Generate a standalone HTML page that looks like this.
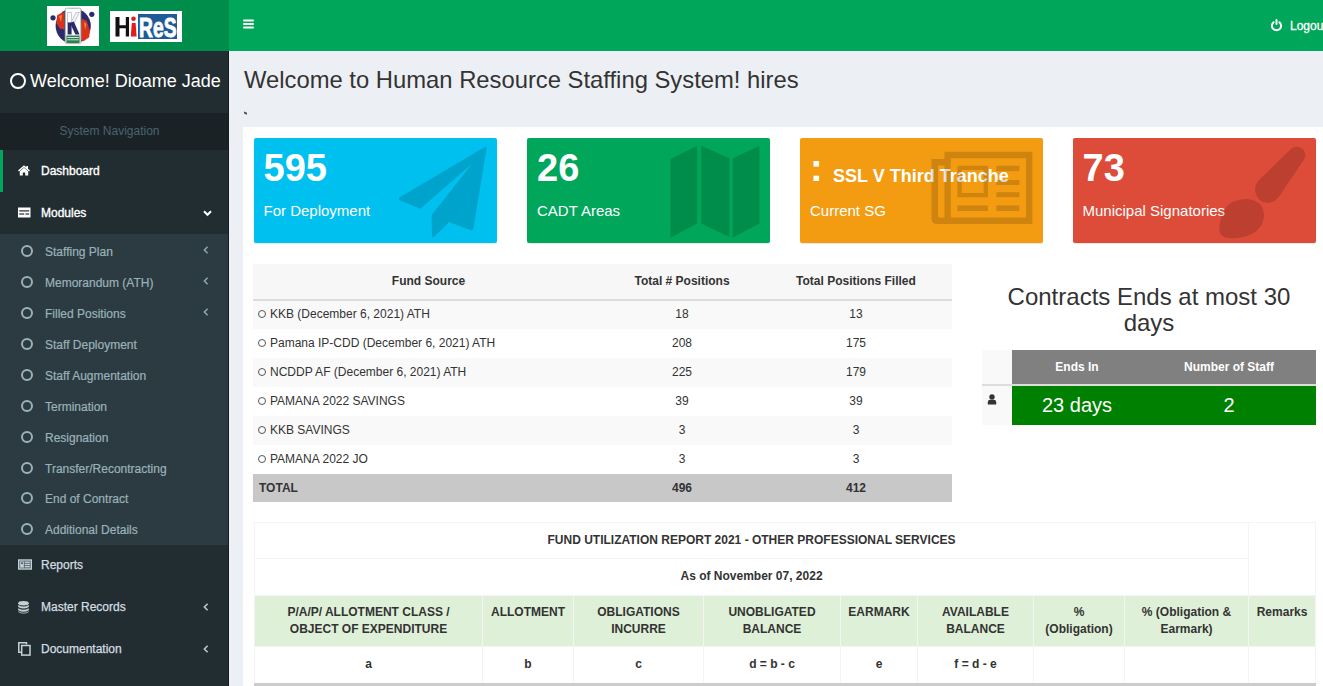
<!DOCTYPE html>
<html><head><meta charset="utf-8">
<style>
*{box-sizing:border-box;margin:0;padding:0}
html,body{width:1323px;height:686px;overflow:hidden;background:#ecf0f5;font-family:"Liberation Sans",sans-serif;color:#333}
.abs{position:absolute}
#logo{left:0;top:0;width:229px;height:51px;background:#008d4c}
#nav{left:229px;top:0;width:1094px;height:51px;background:#00a65a}
#side{left:0;top:51px;width:228px;height:635px;background:#222d32}
#sideborder{left:228px;top:51px;width:1px;height:635px;background:#151b1e}
.user{left:0;top:51px;width:228px;height:62px;color:#fff;font-size:18px}
.navhdr{left:0;top:113px;width:228px;padding-right:9px;height:37px;background:#1a2226;color:#4b646f;font-size:12px;text-align:center;line-height:37px}
.mi{position:absolute;left:0;width:228px;height:42px;color:#fff;font-size:12px;line-height:42px}
.mi .t{position:absolute;left:41px;top:0;color:#d5dde1;-webkit-text-stroke:0.25px #d5dde1}
.mi .t.w{color:#fff;-webkit-text-stroke:0.35px #fff}
.sub{left:0;top:234px;width:228px;height:311px;background:#2c3b41}
.si{position:absolute;left:0;width:228px;height:31px;color:#9ab2b9;font-size:12px;line-height:31px}
.si .t{position:absolute;left:45px;top:0.5px;-webkit-text-stroke:0.2px #9ab2b9}
.si .c{position:absolute;left:21px;top:9px;width:12px;height:12px;border:2px solid #9ab2b9;border-radius:50%}
.chev{position:absolute;left:203px;width:6px;height:6px;border-left:1.5px solid currentColor;border-bottom:1.5px solid currentColor;transform:rotate(45deg)}
#title{left:244px;top:65px;font-size:23.8px;color:#333;white-space:nowrap;line-height:30px}
#box{left:243px;top:127px;width:1090px;height:600px;background:#fff}
.sb{position:absolute;top:138px;height:105px;width:243px;border-radius:2px;color:#fff;overflow:hidden;box-shadow:0 1px 1px rgba(0,0,0,0.1)}
.sb .n{position:absolute;left:10px;top:9px;font-size:38px;font-weight:700;line-height:42px}
.sb .l{position:absolute;left:10px;top:63px;font-size:15px;line-height:20px}
table{border-collapse:collapse}

.ft{width:699px;table-layout:fixed;font-size:12px;color:#333}
.ft th{height:36px;padding-bottom:1px;background:#f7f7f7;border-bottom:2px solid #ddd;font-weight:700;text-align:center;vertical-align:middle}
.ft td{height:29px;text-align:center;vertical-align:middle;white-space:nowrap;padding-bottom:2px}
.ft td.l{text-align:left;padding-left:5px}
.ft tr.o td{background:#f9f9f9}
.ft tr.tot td{background:#c8c8c8;font-weight:700;height:28px;padding-bottom:0}
.ci{display:inline-block;width:8px;height:8px;border:1.2px solid #555;border-radius:50%;margin-right:4px;vertical-align:0px}
.ct{width:334px;table-layout:fixed;font-size:12px}
.ct th{height:35px;font-weight:700;color:#fff;border-bottom:2px solid #ddd}
.ct th.e,.ct td.e{background:#f9f9f9;position:relative}
.ct th.g{background:#808080}
.ct td{height:40px;vertical-align:middle;text-align:center}
.ct td.gg{background:#008000;color:#fff;font-size:20px}
.fu{width:1061px;table-layout:fixed;font-size:12px;color:#333}
.fu td,.fu th{border:1px solid #f4f4f4;text-align:center}
.fu tr.t1 td{height:36px;font-weight:700;padding-bottom:2px}
.fu tr.t2 td{height:37px;font-weight:700;padding-bottom:2px}
.fu tr.hd th{height:51px;background:#dff0d8;font-weight:700;vertical-align:top;padding-top:8px;line-height:17px}
.fu tr.dr td{height:38px;padding-bottom:2px;font-weight:700;border-bottom:3px solid #ccc}
</style></head><body>
<div id="logo" class="abs"></div>
<div id="nav" class="abs"></div>
<svg class="abs" style="left:47px;top:6px" width="52" height="40" viewBox="0 0 52 40">
 <rect x="0" y="0" width="52" height="40" fill="#fff"/>
 <circle cx="26.2" cy="20" r="17.6" fill="#2b2a6e"/>
 <path d="M10.2 8.9 L17.4 6 L17.4 23.6 L12.7 22.4 L9.5 17.2 Z" fill="#d8321f"/>
 <path d="M12 10 L15 9 L14 16 Z" fill="#f08a2a"/>
 <path d="M35 12.7 L39.7 14.7 L42.9 24.9 L42.2 31.3 L36.5 35.2 L33.9 33.9 L33.9 17.2 Z" fill="#d8321f"/>
 <path d="M37 16 L39.5 18 L38 24 Z" fill="#f08a2a"/>
 <circle cx="6" cy="11.8" r="2.6" fill="#2b2a6e"/>
 <circle cx="44.8" cy="8.3" r="2.6" fill="#2b2a6e"/>
 <rect x="18.2" y="2.2" width="15.7" height="35.5" rx="1.5" fill="#fff" stroke="#8fa89a" stroke-width="0.8"/>
 <path d="M20.6 6.5 H24.6 V17 H20.6 Z" fill="#fff" stroke="#b0b0c0" stroke-width="0.7"/>
 <path d="M24.3 16.5 L28.8 6.5 H32.3 L26.8 17.5 Z" fill="#f4f4f8" stroke="#b0b0c0" stroke-width="0.7"/>
 <path d="M20.6 16.5 H24.6 V28.5 H20.6 Z" fill="#2b2a6e"/>
 <path d="M23 17 L26.8 15.6 L32.6 28.5 H28.4 Z" fill="#2b2a6e"/>
 <rect x="19.4" y="29.5" width="13.2" height="7.5" fill="#2f7d50"/>
 <rect x="20.2" y="31" width="11.6" height="1" fill="#cfe3d6"/>
 <rect x="20.2" y="33.3" width="11.6" height="1" fill="#cfe3d6"/>
</svg>
<svg class="abs" style="left:110px;top:11px" width="72" height="31" viewBox="0 0 72 31">
 <rect x="0" y="0" width="72" height="31" fill="#fff"/>
 <rect x="28" y="3" width="39" height="25" fill="#1e5a96"/>
 <path d="M5.5 6 H9.5 V14.3 H15.8 V6 H19 V25.5 H15.8 V17.3 H9.5 V25.5 H5.5 Z" fill="#111"/>
 <circle cx="23.5" cy="7.8" r="2.3" fill="#e21b1b"/>
 <path d="M21.8 12 H25.6 L26.6 25.5 H20.8 Z" fill="#e21b1b"/>
 <text x="29" y="26" font-family="Liberation Sans" font-weight="700" font-size="27" fill="#fff" stroke="#fff" stroke-width="0.9" textLength="37.5" lengthAdjust="spacingAndGlyphs">ReS</text>
</svg>
<svg class="abs" style="left:243px;top:18.5px" width="12" height="10" viewBox="0 0 12 10">
 <rect x="0" y="0.5" width="11" height="2" rx="1" fill="#fff"/>
 <rect x="0" y="4" width="11" height="2" rx="1" fill="#fff"/>
 <rect x="0" y="7.5" width="11" height="2" rx="1" fill="#fff"/>
</svg>
<svg class="abs" style="left:1270px;top:18px" width="13" height="14" viewBox="0 0 13 14">
 <path d="M3.6 4.2 A4.6 4.6 0 1 0 9.4 4.2" stroke="#fff" stroke-width="2" fill="none" stroke-linecap="round"/>
 <rect x="5.5" y="1" width="2" height="6" rx="1" fill="#fff"/>
</svg>
<div class="abs" style="left:1290px;top:18px;font-size:12px;line-height:16px;color:#fff;-webkit-text-stroke:0.3px #fff;white-space:nowrap">Logout</div>
<div id="side" class="abs"></div>
<div id="sideborder" class="abs"></div>
<div class="abs user"><span class="abs" style="left:10px;top:21.5px;width:16px;height:16.5px;border:2.7px solid #fff;border-radius:50%"></span><span class="abs" style="left:30px;top:20px;white-space:nowrap">Welcome! Dioame Jade</span></div>
<div class="abs navhdr">System Navigation</div>
<div class="mi" style="top:150px"><span class="abs" style="left:0;top:0;width:3px;height:42px;background:#00a65a"></span><svg class="abs" style="left:18px;top:15px" width="12" height="11" viewBox="0 0 12 11"><path d="M6 0.3 L0 5.6 L1 6.6 L6 2.3 L11 6.6 L12 5.6 L10 3.8 V1 H8.3 V2.3 Z" fill="#fff"/><path d="M1.8 6.2 L6 2.7 L10.2 6.2 V10.6 H7.2 V7.6 H4.8 V10.6 H1.8 Z" fill="#fff"/></svg><span class="t w">Dashboard</span></div>
<div class="mi" style="top:192px"><svg class="abs" style="left:18px;top:15px" width="13" height="11" viewBox="0 0 13 11"><rect x="0" y="0.5" width="12.5" height="10" fill="#fff"/><rect x="1.2" y="3.3" width="10" height="1.2" fill="#222d32"/><rect x="1.2" y="6.4" width="5" height="1.2" fill="#222d32"/><rect x="7.5" y="6.4" width="3.7" height="1.2" fill="#222d32"/></svg><span class="t w">Modules</span><svg class="abs" style="left:203px;top:18px" width="9" height="7" viewBox="0 0 9 7"><path d="M1 1.2 L4.5 4.8 L8 1.2" stroke="#fff" stroke-width="2" fill="none"/></svg></div>
<div class="abs sub">
 <div class="si" style="top:2px"><span class="c"></span><span class="t">Staffing Plan</span><svg class="abs" style="left:203px;top:10px" width="6" height="8" viewBox="0 0 6 8"><path d="M4.6 0.8 L1.4 4 L4.6 7.2" stroke="#8aa4af" stroke-width="1.6" fill="none"/></svg></div>
 <div class="si" style="top:33px"><span class="c"></span><span class="t">Memorandum (ATH)</span><svg class="abs" style="left:203px;top:10px" width="6" height="8" viewBox="0 0 6 8"><path d="M4.6 0.8 L1.4 4 L4.6 7.2" stroke="#8aa4af" stroke-width="1.6" fill="none"/></svg></div>
 <div class="si" style="top:64px"><span class="c"></span><span class="t">Filled Positions</span><svg class="abs" style="left:203px;top:10px" width="6" height="8" viewBox="0 0 6 8"><path d="M4.6 0.8 L1.4 4 L4.6 7.2" stroke="#8aa4af" stroke-width="1.6" fill="none"/></svg></div>
 <div class="si" style="top:95px"><span class="c"></span><span class="t">Staff Deployment</span></div>
 <div class="si" style="top:126px"><span class="c"></span><span class="t">Staff Augmentation</span></div>
 <div class="si" style="top:157px"><span class="c"></span><span class="t">Termination</span></div>
 <div class="si" style="top:188px"><span class="c"></span><span class="t">Resignation</span></div>
 <div class="si" style="top:219px"><span class="c"></span><span class="t">Transfer/Recontracting</span></div>
 <div class="si" style="top:249px"><span class="c"></span><span class="t">End of Contract</span></div>
 <div class="si" style="top:280px"><span class="c"></span><span class="t">Additional Details</span></div>
</div>
<div class="mi" style="top:544px"><svg class="abs" style="left:18px;top:15px" width="14" height="11" viewBox="0 0 14 11"><rect x="0" y="0.3" width="14" height="10.4" fill="#c5d1d6"/><rect x="1.3" y="1.6" width="11.4" height="7.8" fill="#5b6b72"/><rect x="2.2" y="2.4" width="3.6" height="6.2" fill="#c5d1d6"/><circle cx="4" cy="4.2" r="1.1" fill="#5b6b72"/><rect x="6.8" y="2.6" width="5" height="1.3" fill="#c5d1d6"/><rect x="6.8" y="4.8" width="5" height="1.3" fill="#c5d1d6"/><rect x="6.8" y="7" width="5" height="1.3" fill="#c5d1d6"/></svg><span class="t">Reports</span></div>
<div class="mi" style="top:586px"><svg class="abs" style="left:18px;top:15px" width="11" height="13" viewBox="0 0 11 13"><ellipse cx="5.5" cy="2.3" rx="5.3" ry="2.2" fill="#c5d1d6"/><path d="M0.2 3.9 Q5.5 7 10.8 3.9 V6 Q5.5 9 0.2 6Z" fill="#c5d1d6"/><path d="M0.2 7.2 Q5.5 10.3 10.8 7.2 V9.3 Q5.5 12.3 0.2 9.3Z" fill="#c5d1d6"/><path d="M0.2 10.3 Q5.5 13.4 10.8 10.3 V11 Q5.5 14 0.2 11Z" fill="#c5d1d6"/></svg><span class="t">Master Records</span><svg class="abs" style="left:203px;top:17px" width="6" height="8" viewBox="0 0 6 8"><path d="M4.6 0.8 L1.4 4 L4.6 7.2" stroke="#b8c7ce" stroke-width="1.6" fill="none"/></svg></div>
<div class="mi" style="top:628px"><svg class="abs" style="left:18px;top:14px" width="13" height="14" viewBox="0 0 13 14"><path d="M8.5 2.6 V0.8 H0.8 V10.2 H3" fill="none" stroke="#c5d1d6" stroke-width="1.5"/><rect x="3.7" y="3.5" width="8.3" height="9.6" fill="#222d32" stroke="#c5d1d6" stroke-width="1.5"/></svg><span class="t">Documentation</span><svg class="abs" style="left:203px;top:17px" width="6" height="8" viewBox="0 0 6 8"><path d="M4.6 0.8 L1.4 4 L4.6 7.2" stroke="#b8c7ce" stroke-width="1.6" fill="none"/></svg></div>

<div id="title" class="abs">Welcome to Human Resource Staffing System! hires</div>
<div class="abs" style="left:244px;top:112px;width:2.5px;height:2px;background:#333;transform:skewY(25deg);opacity:.85"></div>
<div id="box" class="abs"></div>
<div class="sb" style="left:253.5px;background:#00c0ef"><span class="n">595</span><span class="l">For Deployment</span><svg class="abs" style="left:0;top:0" width="243" height="105" viewBox="253 138 243 105"><path d="M484.7 146.4 Q486 147 485.6 148.4 L472.3 229 Q471.8 231 469.8 230.3 L448 222 L433.3 236.8 Q431.2 238.2 431 235.6 L430.6 215 L471.3 163.5 L419.4 208.7 L399 200.5 Q396.6 199 398.8 197.3 Z" fill="rgba(0,0,0,0.15)"/></svg></div>
<div class="sb" style="left:527px;background:#00a65a"><span class="n">26</span><span class="l">CADT Areas</span><svg class="abs" style="left:0;top:0" width="243" height="105" viewBox="527 138 243 105"><path d="M670.5 159 L697.2 145.7 V223.6 L670.5 237.8 Z M701.2 145.7 L729.5 158.3 V237 L701.2 223.6 Z M732.7 158.3 L759.4 145.7 V223.6 L732.7 237.8 Z" fill="rgba(0,0,0,0.15)"/></svg></div>
<div class="sb" style="left:800px;background:#f39c12"><span class="n">:</span><span class="abs" style="left:33px;top:26.5px;font-size:18px;font-weight:700;line-height:22px;white-space:nowrap">SSL V Third Tranche</span><span class="l">Current SG</span><svg class="abs" style="left:0;top:0" width="243" height="105" viewBox="800 138 243 105"><g fill="rgba(0,0,0,0.15)"><path fill-rule="evenodd" d="M944.4 151.8 H1032.4 V224 H937 Q931.5 224 931.5 218.5 V159 H944.4 Z M950.8 158.3 V217.5 H1026 V158.3 Z M938 165.5 V216 Q938 217.5 940 217.5 H944.4 V165.5 Z"/><path fill-rule="evenodd" d="M957.4 165.7 H988 V197.2 H957.4 Z M961.8 170 V193 H983.6 V170 Z"/><rect x="996.3" y="165.7" width="23.1" height="5.5"/><rect x="996.3" y="180" width="23.1" height="5"/><rect x="996.3" y="192.2" width="23.1" height="5"/><rect x="957.4" y="205.5" width="30.6" height="5.5"/><rect x="996.3" y="205.5" width="23.1" height="5.5"/></g></svg></div>
<div class="sb" style="left:1072.5px;background:#dd4b39"><span class="n">73</span><span class="l">Municipal Signatories</span><svg class="abs" style="left:0;top:0" width="243" height="105" viewBox="1073 138 243 105"><g fill="rgba(0,0,0,0.15)"><path d="M1291.5 148.5 Q1297 145 1302.5 148.7 Q1307.5 153 1304 159.5 L1279.5 196 Q1274.5 203 1267 203 Q1258 202 1255.5 193 Q1254 186 1258.5 180.5 Z"/><path d="M1233 201.5 Q1251 195 1261 205 Q1266 213 1262.5 223 Q1256 236 1238 238 Q1224 239.5 1220.5 234 Q1217.5 228 1222 215 Q1226 205 1233 201.5 Z"/></g></svg></div>

<!-- fund source table -->
<div class="abs" style="left:253px;top:264px;width:699px">
<table class="ft">
<colgroup><col style="width:351px"><col style="width:156px"><col style="width:192px"></colgroup>
<thead><tr><th>Fund Source</th><th>Total # Positions</th><th>Total Positions Filled</th></tr></thead>
<tbody>
<tr class="o"><td class="l"><i class="ci"></i>KKB (December 6, 2021) ATH</td><td>18</td><td>13</td></tr>
<tr><td class="l"><i class="ci"></i>Pamana IP-CDD (December 6, 2021) ATH</td><td>208</td><td>175</td></tr>
<tr class="o"><td class="l"><i class="ci"></i>NCDDP AF (December 6, 2021) ATH</td><td>225</td><td>179</td></tr>
<tr><td class="l"><i class="ci"></i>PAMANA 2022 SAVINGS</td><td>39</td><td>39</td></tr>
<tr class="o"><td class="l"><i class="ci"></i>KKB SAVINGS</td><td>3</td><td>3</td></tr>
<tr><td class="l"><i class="ci"></i>PAMANA 2022 JO</td><td>3</td><td>3</td></tr>
<tr class="tot"><td class="l" style="padding-left:6px">TOTAL</td><td>496</td><td>412</td></tr>
</tbody></table></div>

<!-- contracts -->
<div class="abs" style="left:982px;top:283.5px;width:334px;text-align:center;font-size:24px;line-height:26.5px;color:#333">Contracts Ends at most 30<br>days</div>
<div class="abs" style="left:982px;top:350px;width:334px">
<table class="ct">
<colgroup><col style="width:30px"><col style="width:130px"><col style="width:174px"></colgroup>
<tr class="h"><th class="e"></th><th class="g">Ends In</th><th class="g">Number of Staff</th></tr>
<tr class="r"><td class="e"><svg width="10" height="11" viewBox="0 0 10 11" style="position:absolute;left:4.5px;top:8px"><circle cx="5" cy="2.9" r="2.7" fill="#333"/><path d="M0.8 10.5 V8.2 Q0.8 5.8 3.2 5.8 H6.8 Q9.2 5.8 9.2 8.2 V10.5 Z" fill="#333"/></svg></td><td class="gg">23 days</td><td class="gg">2</td></tr>
</table></div>

<!-- fund utilization -->
<div class="abs" style="left:254px;top:522px;width:1061px">
<table class="fu">
<colgroup><col style="width:228px"><col style="width:91px"><col style="width:130px"><col style="width:137px"><col style="width:77px"><col style="width:116px"><col style="width:91px"><col style="width:124px"><col style="width:67px"></colgroup>
<tr class="t1"><td colspan="8">FUND UTILIZATION REPORT 2021 - OTHER PROFESSIONAL SERVICES</td><td rowspan="2"></td></tr>
<tr class="t2"><td colspan="8">As of November 07, 2022</td></tr>
<tr class="hd"><th>P/A/P/ ALLOTMENT CLASS /<br>OBJECT OF EXPENDITURE</th><th>ALLOTMENT</th><th>OBLIGATIONS<br>INCURRE</th><th>UNOBLIGATED<br>BALANCE</th><th>EARMARK</th><th>AVAILABLE<br>BALANCE</th><th>%<br>(Obligation)</th><th>% (Obligation &amp;<br>Earmark)</th><th>Remarks</th></tr>
<tr class="dr"><td>a</td><td>b</td><td>c</td><td>d = b - c</td><td>e</td><td>f = d - e</td><td></td><td></td><td></td></tr>
</table></div>
</body></html>
